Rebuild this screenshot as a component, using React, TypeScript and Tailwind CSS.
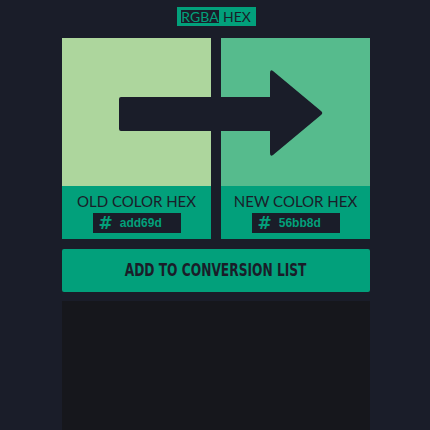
import React from "react";

function Panel({ label, value, color }: { label: string; value: string; color: string }) {
  return (
    <div className="flex flex-col w-[149px]">
      <div className="h-[148px]" style={{ backgroundColor: color }} />
      <div className="h-[53px] bg-[#02a07b] flex flex-col items-center">
        <div className="mt-[6px] text-[15px] leading-[18px] text-[#1a1d29]" style={{ fontFamily: "Lato, sans-serif" }}>
          {label}
        </div>
        <div className="mt-[3px] w-[88px] h-[20px] bg-[#1a1d29] flex items-center pl-[6px]">
          <span className="text-[#02a07b] font-bold text-[17px] leading-none" style={{ fontFamily: "'DejaVu Sans', sans-serif" }}>#</span>
          <span className="ml-[7px] text-[#02a07b] text-[12px] leading-none font-bold" style={{ fontFamily: "'Liberation Sans', Arial, sans-serif" }}>{value}</span>
        </div>
      </div>
    </div>
  );
}

export default function App() {
  return (
    <div className="w-[430px] h-[430px] bg-[#1a1d29] overflow-hidden">
      <div className="w-[308px] ml-[62px] flex flex-col">
        <div className="flex justify-start mt-[7px] ml-[115px]">
          <div className="w-[79px] h-[19px] flex items-center bg-[#02a07b] pl-[4px]">
            <div className="bg-[#1a1d29] text-[#02a07b] text-[14px] w-[38px] h-[13px] flex items-center justify-center" style={{ fontFamily: "Lato, sans-serif" }}>
              <span className="leading-none">RGBA</span>
            </div>
            <div className="text-[#1a1d29] text-[14px] leading-none ml-[4px]" style={{ fontFamily: "Lato, sans-serif" }}>HEX</div>
          </div>
        </div>
        <div className="relative mt-[12px] flex gap-[10px]">
          <Panel label="OLD COLOR HEX" value="add69d" color="#add69d" />
          <Panel label="NEW COLOR HEX" value="56bb8d" color="#56bb8d" />
          <svg className="absolute left-0 top-0" width="308" height="150" viewBox="0 0 308 150">
            <path
              d="M59 59 L208 59 L208 35 Q208 31 211 33 L259 73 Q261.5 75 259 77 L211 117 Q208 119 208 115 L208 93 L59 93 Q57 93 57 91 L57 61 Q57 59 59 59 Z"
              fill="#1a1d29"
            />
          </svg>
        </div>
        <div className="mt-[10px] h-[43px] rounded-[2px] bg-[#02a07b] flex items-center justify-center">
          <span className="inline-block text-[#1a1d29] text-[17px] font-bold scale-x-[0.8]" style={{ fontFamily: "'DejaVu Sans Condensed', 'DejaVu Sans', sans-serif" }}>ADD TO CONVERSION LIST</span>
        </div>
        <div className="mt-[9px] h-[200px] bg-[#16171c]" />
      </div>
    </div>
  );
}
